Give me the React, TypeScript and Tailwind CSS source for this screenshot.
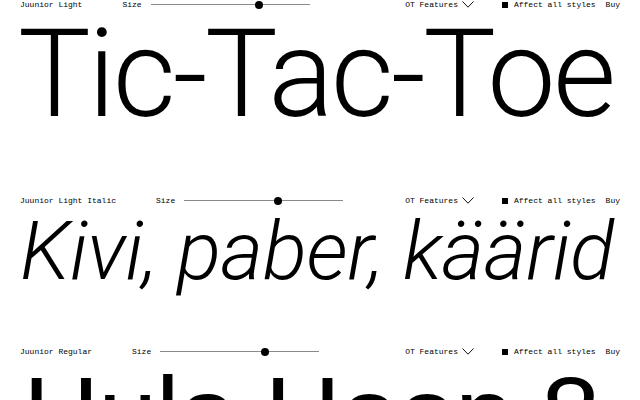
import React from 'react';

type Row = {
  name: string;
  thumb: number;
};

function Chevron() {
  return (
    <svg width="12" height="7" viewBox="0 0 12 7" className="ml-[4px] text-[#111]">
      <polyline points="0.5,0.5 6,6.2 11.5,0.5" fill="none" stroke="currentColor" strokeWidth="1" />
    </svg>
  );
}

function Toolbar({ name, thumb }: Row) {
  return (
    <div className="flex h-[9px] items-center px-[20px] font-['Liberation_Mono',monospace] text-[8px] leading-none text-black whitespace-nowrap">
      <span>{name}</span>
      <span className="ml-[40px]">Size</span>
      <div className="relative ml-[9px] flex h-[9px] w-[159px] items-center">
        <div className="h-px w-full bg-[#8a8a8a]" />
        <div
          className="absolute top-1/2 h-[8px] w-[8px] -translate-x-1/2 -translate-y-1/2 rounded-full bg-black"
          style={{ left: thumb }}
        />
      </div>
      <div className="ml-auto flex items-center">
        <span>OT Features</span>
        <Chevron />
        <span className="ml-[28px] h-[6px] w-[6px] bg-black" />
        <span className="ml-[6px]">Affect all styles</span>
        <span className="ml-[10px]">Buy</span>
      </div>
    </div>
  );
}

export default function App() {
  return (
    <div className="h-[400px] w-[640px] overflow-hidden bg-white text-black">
      <section className="pb-[60px]">
        <Toolbar name="Juunior Light" thumb={108} />
        <div className="mt-[5px] whitespace-nowrap pl-[18px] font-['Roboto',sans-serif] text-[122px] font-light leading-none tracking-[-2.8px]">
          Tic-Tac-Toe
        </div>
      </section>

      <section className="pb-[55px]">
        <Toolbar name="Juunior Light Italic" thumb={94} />
        <div className="mt-[5px] whitespace-nowrap pl-[20px] font-['Roboto',sans-serif] text-[82px] font-light italic leading-none tracking-[-0.4px]">
          Kivi, paber, käärid
        </div>
      </section>

      <section>
        <Toolbar name="Juunior Regular" thumb={105} />
        <div className="mt-[5px] whitespace-nowrap pl-[23px] font-['Liberation_Sans',sans-serif] text-[106px] leading-none tracking-[-1.2px]">
          Hula Hoop 8
        </div>
      </section>
    </div>
  );
}
